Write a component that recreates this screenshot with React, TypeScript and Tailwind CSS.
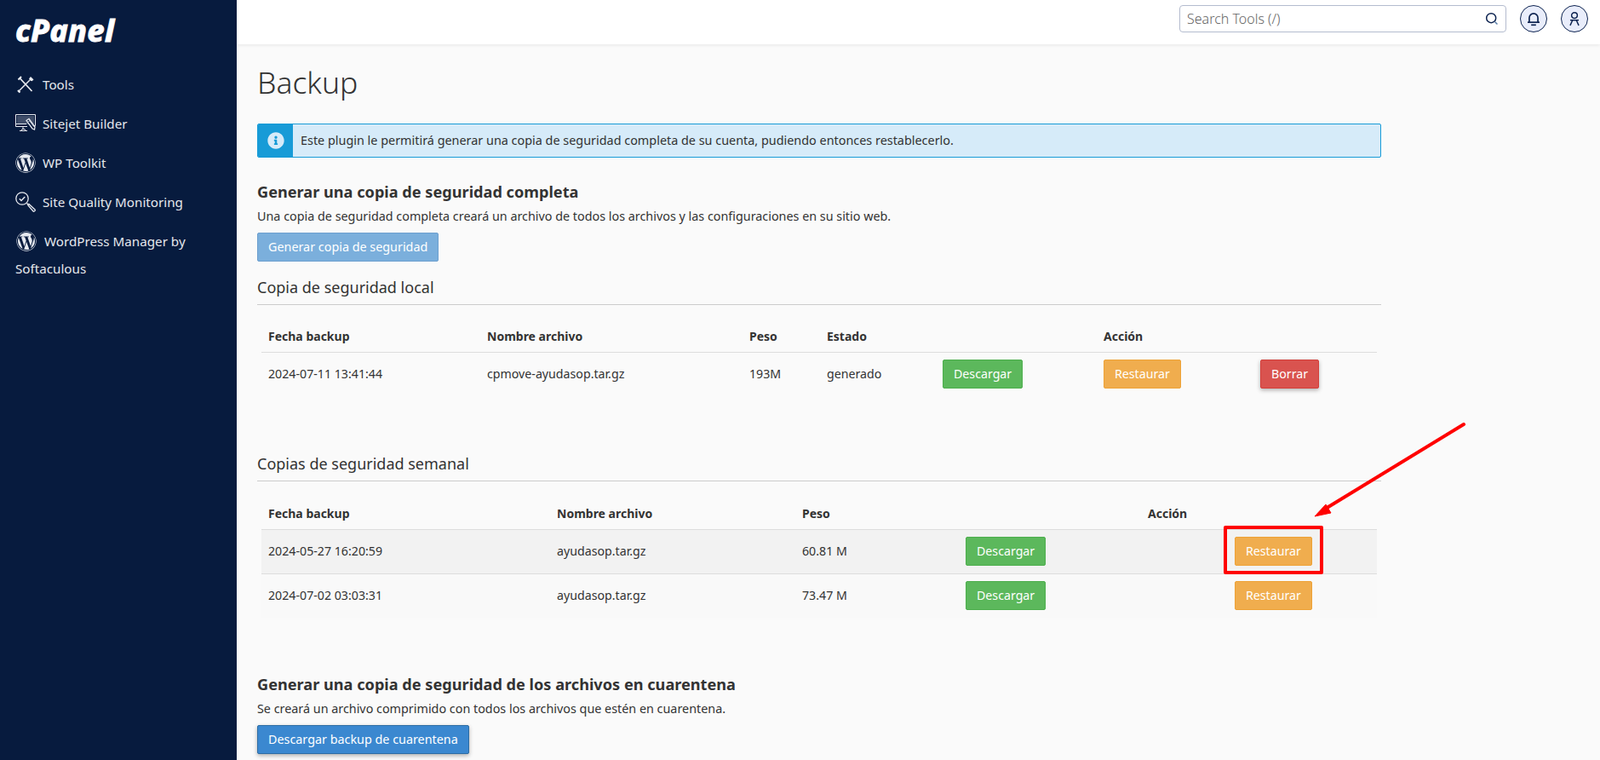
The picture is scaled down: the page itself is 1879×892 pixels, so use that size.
import { FaWordpress, FaInfoCircle } from "react-icons/fa";

const NAVY = "#071b3e";

function ToolsIcon() {
  return (
    <svg viewBox="0 0 24 24" className="h-6 w-6 shrink-0" fill="none" stroke="#eef0f4" strokeWidth="2">
      <path d="M5.500 5 19.500 20" strokeWidth="1.700" />
      <path d="M3.500 6.500 7 3" strokeWidth="2" />
      <path d="M19 5 4.500 19.500" strokeWidth="1.500" />
      <path d="M18 3.500 21 6.500 19 8 16.500 5.500Z" fill="#eef0f4" strokeWidth="1" />
      <path d="M3 19 5.500 21.500" strokeWidth="2.200" />
    </svg>
  );
}

function BuilderIcon() {
  return (
    <svg viewBox="0 0 24 24" className="h-6 w-6 shrink-0" fill="none" stroke="#e6e9ef" strokeWidth="1">
      <path d="M.5 1.500h23v13h-2" />
      <path d="M14 15.500H.5v-14" />
      <path d="M2 3h20v10H2z" fill="#3f4d69" stroke="none" />
      <path d="M.5 12.500H13" />
      <path d="M9 16v2.500M5 20.500h9M7 20.500l1-2h3l1 2" />
      <path d="M13 8.500l3-2 7 9.500-.5 3-2.500-1z" fill={NAVY} strokeWidth="1.300" />
      <path d="M15 10l3-2M16.500 8.500l5 7" strokeWidth=".7" />
    </svg>
  );
}

function QualityIcon() {
  return (
    <svg viewBox="0 0 24 24" className="h-6 w-6 shrink-0" fill="none" stroke="#e6e9ef" strokeWidth="1.300">
      <circle cx="8" cy="8" r="7.200" />
      <path d="M4.800 8.300l2.200 2.200 4.200-4.500" strokeWidth="1.500" />
      <path d="M13.500 13.500l1.500 1.500" strokeWidth="1.500" />
      <path d="M14.800 15.700l1.200-1.200 7 6.500c.8 1-.8 2.800-2 2z" />
    </svg>
  );
}

function BellIcon() {
  return (
    <svg viewBox="0 0 16 16" className="h-[18px] w-[18px]" fill="none" stroke="#0d2350" strokeWidth="1.500">
      <path d="M3.500 11.500V7a4.500 4.500 0 0 1 9 0v4.500" />
      <path d="M1.800 11.700h12.400" />
      <path d="M5.500 14.500h5" />
    </svg>
  );
}

function UserIcon() {
  return (
    <svg viewBox="0 0 16 16" className="h-[18px] w-[18px]" fill="none" stroke="#0d2350" strokeWidth="1.300">
      <circle cx="8" cy="4.500" r="3" />
      <path d="M3.500 9.500h9" />
      <path d="M6 9.500 3.500 15M10 9.500l2.500 5.500" />
    </svg>
  );
}

function SearchIcon() {
  return (
    <svg viewBox="0 0 16 16" className="h-4 w-4" fill="none" stroke="#0d2350">
      <circle cx="7.200" cy="7.200" r="5.500" strokeWidth="1.500" />
      <path d="M11.500 11.500 14.500 14.500" stroke="#5b7fa8" strokeWidth="1.500" />
    </svg>
  );
}

function Btn({ color, children }: { color: "green" | "orange" | "red"; children: string }) {
  const cls = {
    green: "bg-[#5cb85c] border-[#4cae4c]",
    orange: "bg-[#f0ad4e] border-[#eea236]",
    red: "bg-[#d9534f] border-[#d43f3a] shadow-[0_2px_5px_rgba(0,0,0,0.3)]",
  }[color];
  return (
    <button className={`block h-[34px] rounded-[2px] border px-3 text-[14.2px] text-white ${cls}`}>
      {children}
    </button>
  );
}

const thClass = "h-[36px] border-b border-[#ddd] px-2 text-left text-sm font-bold text-[#333]";
const tdClass = "h-[51px] px-2 pt-2 pb-[9px] text-[14.2px] text-[#333]";

function SectionTitle({ children }: { children: string }) {
  return (
    <>
      <h3 className="text-[18px] leading-[26px] text-[#333]">{children}</h3>
      <hr className="mt-[7px] border-t border-[#ccc]" />
    </>
  );
}

export default function App() {
  return (
    <div className="relative flex h-[892px] overflow-hidden bg-[#fafafa] font-['Open_Sans',sans-serif] text-[#333]">
      {/* Sidebar */}
      <aside className="w-[278px] shrink-0 bg-[#071b3e] px-[18px] font-['Roboto',sans-serif] text-[15.2px] text-[#e4e7ec]">
        <div className="mt-[14px] h-[62px] font-['Open_Sans',sans-serif] text-[36px] leading-[44px] font-extrabold tracking-[0.2px] text-white italic [-webkit-text-stroke:0.8px_#fff]">
          cPanel
        </div>
        <nav className="flex flex-col">
          <a className="flex h-[46px] items-center gap-2">
            <ToolsIcon />
            Tools
          </a>
          <a className="flex h-[46px] items-center gap-2">
            <BuilderIcon />
            Sitejet Builder
          </a>
          <a className="flex h-[46px] items-center gap-2">
            <FaWordpress className="h-6 w-6 shrink-0 text-[#e6e9ef]" />
            WP Toolkit
          </a>
          <a className="flex h-[46px] items-center gap-2">
            <QualityIcon />
            Site Quality Monitoring
          </a>
          <a className="mt-[7px] block leading-[32px]">
            <FaWordpress className="mr-[9px] ml-px inline h-6 w-6 align-[-6px] text-[#e6e9ef]" />
            WordPress Manager by Softaculous
          </a>
        </nav>
      </aside>

      <div className="flex min-w-0 flex-1 flex-col">
        {/* Top bar */}
        <header className="flex h-[52px] shrink-0 items-start justify-end gap-4 bg-white pt-[6px] pr-[14px] shadow-[0_1px_4px_rgba(0,0,0,0.08)]">
          <div className="flex h-8 w-[384px] items-center rounded border border-[#b4bccf] bg-white px-2">
            <input
              placeholder="Search Tools (/)"
              className="min-w-0 flex-1 text-base font-light outline-none placeholder:text-[#666]"
            />
            <SearchIcon />
          </div>
          <button className="flex h-8 w-8 items-center justify-center rounded-full border border-[#0d2350] bg-[#e9edfb]">
            <BellIcon />
          </button>
          <button className="flex h-8 w-8 items-center justify-center rounded-full border border-[#0d2350] bg-[#e9edfb]">
            <UserIcon />
          </button>
        </header>

        {/* Page */}
        <main className="w-[1344px] pt-[24px] pl-[24px]">
          <h1 className="text-[35.5px] leading-10 font-light text-[#333]">Backup</h1>

          <div className="mt-[29px] flex h-10 w-[1320px] overflow-hidden rounded-[2px] border border-[#179bd7] bg-[#d6ebf9] text-[14.4px]">
            <div className="flex w-[41px] shrink-0 items-center justify-center bg-[#179bd7]">
              <FaInfoCircle className="h-5 w-5 text-[#d6ebf9]" />
            </div>
            <p className="flex items-center pl-[9px]">
              Este plugin le permitirá generar una copia de seguridad completa de su cuenta, pudiendo entonces restablecerlo.
            </p>
          </div>

          <h2 className="mt-[27px] text-[18.15px] leading-[26px] font-bold">Generar una copia de seguridad completa</h2>
          <p className="mt-[6px] text-[14.35px] leading-5">
            Una copia de seguridad completa creará un archivo de todos los archivos y las configuraciones en su sitio web.
          </p>
          <button className="mt-[9px] block h-[34px] rounded-[2px] border border-[#6d9fcf] bg-[#7bafdc] px-3 text-[14.35px] text-white">
            Generar copia de seguridad
          </button>

          <div className="mt-[17px] w-[1320px]">
            <SectionTitle>Copia de seguridad local</SectionTitle>
          </div>

          <table className="mt-[19px] ml-[5px] w-[1310px] table-fixed border-collapse">
            <colgroup>
              <col className="w-[257px]" />
              <col className="w-[308px]" />
              <col className="w-[91px]" />
              <col className="w-[136px]" />
              <col className="w-[189px]" />
              <col className="w-[184px]" />
              <col className="w-[145px]" />
            </colgroup>
            <thead>
              <tr>
                <th className={thClass}>Fecha backup</th>
                <th className={thClass}>Nombre archivo</th>
                <th className={thClass}>Peso</th>
                <th className={thClass}>Estado</th>
                <th className={thClass}></th>
                <th className={thClass}>Acción</th>
                <th className={thClass}></th>
              </tr>
            </thead>
            <tbody>
              <tr>
                <td className={tdClass}>2024-07-11 13:41:44</td>
                <td className={tdClass}>cpmove-ayudasop.tar.gz</td>
                <td className={tdClass}>193M</td>
                <td className={tdClass}>generado</td>
                <td className={tdClass}><Btn color="green">Descargar</Btn></td>
                <td className={tdClass}><Btn color="orange">Restaurar</Btn></td>
                <td className={tdClass}><Btn color="red">Borrar</Btn></td>
              </tr>
            </tbody>
          </table>

          <div className="mt-[66px] w-[1320px]">
            <SectionTitle>Copias de seguridad semanal</SectionTitle>
          </div>

          <table className="mt-[20.5px] ml-[5px] w-[1310px] table-fixed border-collapse">
            <colgroup>
              <col className="w-[339px]" />
              <col className="w-[288px]" />
              <col className="w-[192px]" />
              <col className="w-[214px]" />
              <col className="w-[102px]" />
              <col className="w-[175px]" />
            </colgroup>
            <thead>
              <tr>
                <th className={thClass}>Fecha backup</th>
                <th className={thClass}>Nombre archivo</th>
                <th className={thClass}>Peso</th>
                <th className={thClass}></th>
                <th className={thClass}>Acción</th>
                <th className={thClass}></th>
              </tr>
            </thead>
            <tbody>
              <tr className="border-b border-[#ddd] bg-[#f2f2f2]">
                <td className={tdClass}>2024-05-27 16:20:59</td>
                <td className={tdClass}>ayudasop.tar.gz</td>
                <td className={tdClass}>60.81 M</td>
                <td className={tdClass}><Btn color="green">Descargar</Btn></td>
                <td className={tdClass}></td>
                <td className={tdClass}><Btn color="orange">Restaurar</Btn></td>
              </tr>
              <tr className="bg-[#f9f9f9]">
                <td className={tdClass}>2024-07-02 03:03:31</td>
                <td className={tdClass}>ayudasop.tar.gz</td>
                <td className={tdClass}>73.47 M</td>
                <td className={tdClass}><Btn color="green">Descargar</Btn></td>
                <td className={tdClass}></td>
                <td className={tdClass}><Btn color="orange">Restaurar</Btn></td>
              </tr>
            </tbody>
          </table>

          <h2 className="mt-[65px] text-[18.15px] leading-[26px] font-bold">
            Generar una copia de seguridad de los archivos en cuarentena
          </h2>
          <p className="mt-[6px] text-[14.35px] leading-5">
            Se creará un archivo comprimido con todos los archivos que estén en cuarentena.
          </p>
          <button className="mt-[9px] block h-[34px] rounded-[2px] border border-[#2e6da4] bg-[#3b88d0] px-3 text-[14.35px] text-white shadow-[0_2px_5px_rgba(0,0,0,0.3)]">
            Descargar backup de cuarentena
          </button>
        </main>
      </div>

      {/* Red annotation over the page */}
      <div className="absolute top-[617px] left-[1437px] h-[57px] w-[117px] rounded-[2px] border-4 border-[#f00]" />
      <svg className="absolute top-[490px] left-[1535px] h-[125px] w-[195px]" viewBox="0 0 195 125" fill="none">
        <path d="M184 8 20 108" stroke="#f00" strokeWidth="4" strokeLinecap="round" />
        <path d="M9 116 22 102 28 112Z" fill="#f00" stroke="#f00" strokeWidth="1" />
      </svg>
    </div>
  );
}
